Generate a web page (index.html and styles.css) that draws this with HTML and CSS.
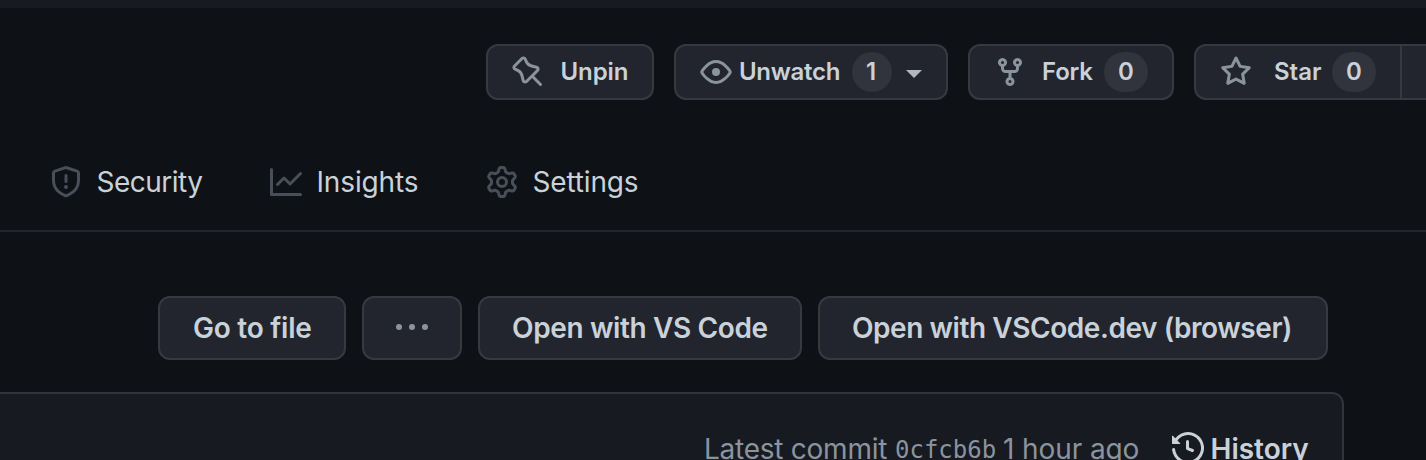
FILE: index.html
```
<!DOCTYPE html>
<html lang="en">
<head>
<meta charset="utf-8">
<title>Repository</title>
<link rel="stylesheet" href="styles.css">
</head>
<body>
<div class="topbar"></div>
<div class="actions">
  <button class="btn btn-sm unpin"><svg class="icon" viewBox="0 0 16 16"><path d="M4.456.734a1.75 1.75 0 012.826.504l.613 1.327a3.081 3.081 0 002.084 1.707l2.454.584c1.332.317 1.8 1.972.832 2.94L11.06 10l3.72 3.72a.75.75 0 11-1.061 1.06L10 11.06l-2.204 2.205c-.968.968-2.623.5-2.94-.832l-.584-2.454a3.081 3.081 0 00-1.707-2.084l-1.327-.613a1.75 1.75 0 01-.504-2.826L4.456.734zM5.92 1.866a.25.25 0 00-.404-.072L1.794 5.516a.25.25 0 00.072.404l1.328.613A4.582 4.582 0 015.73 9.63l.584 2.454a.25.25 0 00.42.12l5.47-5.47a.25.25 0 00-.12-.42L9.63 5.73a4.581 4.581 0 01-3.098-2.537L5.92 1.866z"/></svg><span class="label">Unpin</span></button>
  <button class="btn btn-sm unwatch"><svg class="icon" viewBox="0 0 16 16"><path d="M1.679 7.932c.412-.621 1.242-1.75 2.366-2.717C5.175 4.242 6.527 3.5 8 3.5c1.473 0 2.824.742 3.955 1.715 1.124.967 1.954 2.096 2.366 2.717a.119.119 0 010 .136c-.412.621-1.242 1.75-2.366 2.717C10.825 11.758 9.473 12.5 8 12.5c-1.473 0-2.824-.742-3.955-1.715C2.92 9.818 2.09 8.69 1.679 8.068a.119.119 0 010-.136zM8 2c-1.981 0-3.67.992-4.933 2.078C1.797 5.169.88 6.423.43 7.1a1.619 1.619 0 000 1.798c.45.678 1.367 1.932 2.637 3.024C4.329 13.008 6.019 14 8 14c1.981 0 3.67-.992 4.933-2.078 1.27-1.091 2.187-2.345 2.637-3.023a1.619 1.619 0 000-1.798c-.45-.678-1.367-1.932-2.637-3.023C11.671 2.992 9.981 2 8 2zm0 8a2 2 0 100-4 2 2 0 000 4z"/></svg><span class="label">Unwatch</span><span class="count">1</span><span class="caret"></span></button>
  <button class="btn btn-sm fork"><svg class="icon" viewBox="0 0 16 16"><path fill-rule="evenodd" d="M5 3.25a.75.75 0 11-1.5 0 .75.75 0 011.5 0zm0 2.122a2.25 2.25 0 10-1.5 0v.878A2.25 2.25 0 005.75 8.5h1.5v2.128a2.251 2.251 0 101.5 0V8.5h1.5a2.25 2.25 0 002.25-2.25v-.878a2.25 2.25 0 10-1.5 0v.878a.75.75 0 01-.75.75h-4.5A.75.75 0 015 6.25v-.878zm3.75 7.378a.75.75 0 11-1.5 0 .75.75 0 011.5 0zm3-8.75a.75.75 0 100-1.5.75.75 0 000 1.5z"/></svg><span class="label">Fork</span><span class="count">0</span></button>
  <div class="btn-group"><button class="btn btn-sm star"><svg class="icon" viewBox="0 0 16 16"><path d="M8 .25a.75.75 0 01.673.418l1.882 3.815 4.21.612a.75.75 0 01.416 1.279l-3.046 2.97.719 4.192a.75.75 0 01-1.088.791L8 12.347l-3.766 1.98a.75.75 0 01-1.088-.79l.72-4.194L.818 6.374a.75.75 0 01.416-1.28l4.21-.611L7.327.668A.75.75 0 018 .25zm0 2.445L6.615 5.5a.75.75 0 01-.564.41l-3.097.45 2.24 2.184a.75.75 0 01.216.664l-.528 3.084 2.769-1.456a.75.75 0 01.698 0l2.77 1.456-.53-3.084a.75.75 0 01.216-.664l2.24-2.183-3.096-.45a.75.75 0 01-.564-.41L8 2.694v.001z"/></svg><span class="label">Star</span><span class="count">0</span></button><button class="btn btn-sm star-menu" aria-label="Lists"></button></div>
</div>
<nav class="tabs">
  <a class="tab security"><svg class="icon" viewBox="0 0 16 16"><path fill-rule="evenodd" d="M7.467.133a1.75 1.75 0 011.066 0l5.25 1.68A1.75 1.75 0 0115 3.48V7c0 1.566-.32 3.182-1.303 4.682-.983 1.498-2.585 2.813-5.032 3.855a1.7 1.7 0 01-1.33 0c-2.447-1.042-4.049-2.357-5.032-3.855C1.32 10.182 1 8.566 1 7V3.48a1.75 1.75 0 011.217-1.667l5.25-1.68zm.61 1.429a.25.25 0 00-.153 0l-5.25 1.68a.25.25 0 00-.174.238V7c0 1.358.275 2.666 1.057 3.86.784 1.194 2.121 2.34 4.366 3.297a.2.2 0 00.154 0c2.245-.956 3.582-2.104 4.366-3.298C13.225 9.666 13.5 8.36 13.5 7V3.48a.25.25 0 00-.174-.237l-5.25-1.68zM9 10.5a1 1 0 11-2 0 1 1 0 012 0zm-.25-5.75a.75.75 0 10-1.5 0v3a.75.75 0 001.5 0v-3z"/></svg><span class="label">Security</span></a>
  <a class="tab insights"><svg class="icon" viewBox="0 0 16 16"><path fill-rule="evenodd" d="M1.5 1.75a.75.75 0 00-1.5 0v12.5c0 .414.336.75.75.75h14.5a.75.75 0 000-1.5H1.5V1.75zm14.28 2.53a.75.75 0 00-1.06-1.06L10 7.94 7.53 5.47a.75.75 0 00-1.06 0L3.22 8.72a.75.75 0 001.06 1.06L7 7.06l2.47 2.47a.75.75 0 001.06 0l5.25-5.25z"/></svg><span class="label">Insights</span></a>
  <a class="tab settings"><svg class="icon" viewBox="0 0 16 16"><path fill-rule="evenodd" d="M7.429 1.525a6.593 6.593 0 011.142 0c.036.003.108.036.137.146l.289 1.105c.147.56.55.967.997 1.189.174.086.341.183.501.29.417.278.97.423 1.53.27l1.102-.303c.11-.03.175.016.195.046.219.31.41.641.573.989.014.031.022.11-.059.19l-.815.806c-.411.406-.562.957-.53 1.456a4.588 4.588 0 010 .582c-.032.499.119 1.05.53 1.456l.815.806c.08.08.073.159.059.19a6.494 6.494 0 01-.573.99c-.02.029-.086.074-.195.045l-1.103-.303c-.559-.153-1.112-.008-1.529.27-.16.107-.327.204-.5.29-.449.222-.851.628-.998 1.189l-.289 1.105c-.029.11-.101.143-.137.146a6.613 6.613 0 01-1.142 0c-.036-.003-.108-.037-.137-.146l-.289-1.105c-.147-.56-.55-.967-.997-1.189a4.502 4.502 0 01-.501-.29c-.417-.278-.97-.423-1.53-.27l-1.102.303c-.11.03-.175-.016-.195-.046a6.492 6.492 0 01-.573-.989c-.014-.031-.022-.11.059-.19l.815-.806c.411-.406.562-.957.53-1.456a4.587 4.587 0 010-.582c.032-.499-.119-1.05-.53-1.456l-.815-.806c-.08-.08-.073-.159-.059-.19a6.44 6.44 0 01.573-.99c.02-.029.086-.075.195-.045l1.103.303c.559.153 1.112.008 1.529-.27.16-.107.327-.204.5-.29.449-.222.851-.628.998-1.189l.289-1.105c.029-.11.101-.143.137-.146zM8 0c-.236 0-.47.01-.701.03-.743.065-1.29.615-1.458 1.261l-.29 1.106c-.017.066-.078.158-.211.224a5.994 5.994 0 00-.668.386c-.123.082-.233.09-.3.071L3.27 2.776c-.644-.177-1.392.02-1.82.63a7.977 7.977 0 00-.704 1.217c-.315.675-.111 1.422.363 1.891l.815.806c.05.048.098.147.088.294a6.084 6.084 0 000 .772c.01.147-.038.246-.088.294l-.815.806c-.474.469-.678 1.216-.363 1.891.2.428.436.835.704 1.218.428.609 1.176.806 1.82.63l1.103-.303c.066-.019.176-.011.299.071.213.143.436.272.668.386.133.066.194.158.212.224l.289 1.106c.169.646.715 1.196 1.458 1.26a8.094 8.094 0 001.402 0c.743-.064 1.29-.614 1.458-1.26l.29-1.106c.017-.066.078-.158.211-.224a5.98 5.98 0 00.668-.386c.123-.082.233-.09.3-.071l1.102.302c.644.177 1.392-.02 1.82-.63.268-.382.505-.789.704-1.217.315-.675.111-1.422-.364-1.891l-.814-.806c-.05-.048-.098-.147-.088-.294a6.1 6.1 0 000-.772c-.01-.147.039-.246.088-.294l.814-.806c.475-.469.679-1.216.364-1.891a7.992 7.992 0 00-.704-1.218c-.428-.609-1.176-.806-1.82-.63l-1.103.303c-.066.019-.176.011-.299-.071a5.991 5.991 0 00-.668-.386c-.133-.066-.194-.158-.212-.224L10.16 1.29C9.99.645 9.444.095 8.701.031A8.094 8.094 0 008 0zm1.5 8a1.5 1.5 0 11-3 0 1.5 1.5 0 013 0zM11 8a3 3 0 11-6 0 3 3 0 016 0z"/></svg><span class="label">Settings</span></a>
</nav>
<div class="toolbar">
  <button class="btn goto"><span class="label">Go to file</span></button>
  <button class="btn more" aria-label="More"><svg class="dots" viewBox="0 0 32 6"><circle cx="3" cy="3" r="3"/><circle cx="16" cy="3" r="3"/><circle cx="29" cy="3" r="3"/></svg></button>
  <button class="btn vscode"><span class="label">Open with VS Code</span></button>
  <button class="btn vsdev"><span class="label">Open with VSCode.dev (browser)</span></button>
</div>
<div class="commit">
  <span class="latest">Latest commit</span><span class="sha">0cfcb6b</span><span class="ago">1 hour ago</span>
  <svg class="icon" viewBox="0 0 16 16"><path d="M1.643 3.143L.427 1.927A.25.25 0 000 2.104V5.75c0 .138.112.25.25.25h3.646a.25.25 0 00.177-.427L2.715 4.215a6.5 6.5 0 11-1.18 4.458.75.75 0 10-1.493.154 8.001 8.001 0 101.6-5.684zM7.75 4a.75.75 0 01.75.75v2.992l2.028.812a.75.75 0 01-.557 1.392l-2.5-1A.75.75 0 017 8.25v-3.5A.75.75 0 017.75 4z"/></svg><span class="history">History</span>
</div>
</body>
</html>
```
FILE: styles.css
```
* { box-sizing: border-box; }
body {
  margin: 0;
  width: 1426px;
  height: 460px;
  overflow: hidden;
  background: #0e1116;
  color: #c9d1d9;
  font-family: Inter, "Liberation Sans", sans-serif;
}
.topbar { height: 8px; background: #171a21; }
.icon { width: 32px; height: 32px; flex: none; fill: #8b949e; display: block; }
.label { white-space: nowrap; text-align: left; }
.btn {
  display: flex;
  align-items: center;
  flex: none;
  height: 64px;
  padding: 0 0 0 32px;
  border: 2px solid #363a40;
  border-radius: 12px;
  background: #22252d;
  color: #c9d1d9;
  font: 600 28px/40px Inter, "Liberation Sans", sans-serif;
}
.btn-sm { height: 56px; padding-left: 24px; font-size: 24px; }
.actions { display: flex; gap: 20px; padding: 36px 0 0 486px; }
.count {
  height: 40px;
  width: 44px;
  border-radius: 20px;
  background: #31343c;
  text-align: center;
  flex: none;
}
.unpin { width: 168px; }
.unpin .label { margin-left: 16.5px; letter-spacing: -0.1px; }
.unwatch { width: 274px; }
.unwatch .label { width: 113px; margin-left: 7px; letter-spacing: -0.3px; }
.unwatch .count { width: 40px; padding-right: 2px; }
.caret {
  margin: 4px 0 0 14px;
  border: 8px solid transparent;
  border-top-color: #b1b8c0;
  border-bottom: 0;
}
.fork { width: 206px; }
.fork .label { width: 62px; margin-left: 16px; letter-spacing: -0.2px; }
.btn-group { display: flex; flex: none; width: 232px; overflow: hidden; }
.star { width: 208px; border-radius: 12px 0 0 12px; }
.star .label { width: 58px; margin-left: 22px; }
.star-menu { width: 60px; margin-left: -2px; border-radius: 0 12px 12px 0; border-left-width: 2px; }
.tabs {
  display: flex;
  height: 132px;
  padding: 62px 0 0 50px;
  border-bottom: 2px solid #21252b;
  font-size: 28px;
  line-height: 40px;
}
.tab { display: flex; align-items: center; height: 40px; }
.tab .icon { fill: #484f58; }
.tab .label { margin-left: 14.5px; letter-spacing: -0.15px; }
.security { width: 220px; }
.security .label { letter-spacing: -0.5px; }
.insights { width: 216px; }
.toolbar { display: flex; gap: 16px; padding: 64px 0 0 158px; }
.goto { width: 188px; padding-left: 33px; letter-spacing: -0.25px; }
.more { width: 100px; }
.dots { width: 32px; height: 6px; margin-top: -2px; fill: #8b949e; }
.vscode { width: 324px; letter-spacing: -0.37px; }
.vsdev { width: 510px; letter-spacing: -0.44px; }
.commit {
  display: flex;
  height: 68px;
  width: 1346px;
  margin: 32px 0 0 -2px;
  padding: 34px 0 0 704px;
  border: 2px solid #31353a;
  border-bottom: 0;
  border-radius: 0 12px 0 0;
  background: #171a21;
  color: #8b949e;
  font-size: 28px;
  line-height: 42px;
  white-space: nowrap;
}
.commit .icon { margin-top: 4px; fill: #c9d1d9; }
.latest { width: 191px; letter-spacing: -0.25px; }
.sha { width: 108px; font: 24px/44px "DejaVu Sans Mono", monospace; }
.ago { width: 169px; letter-spacing: -0.1px; }
.history { margin-left: 6.5px; color: #c9d1d9; font-weight: 600; }
```
